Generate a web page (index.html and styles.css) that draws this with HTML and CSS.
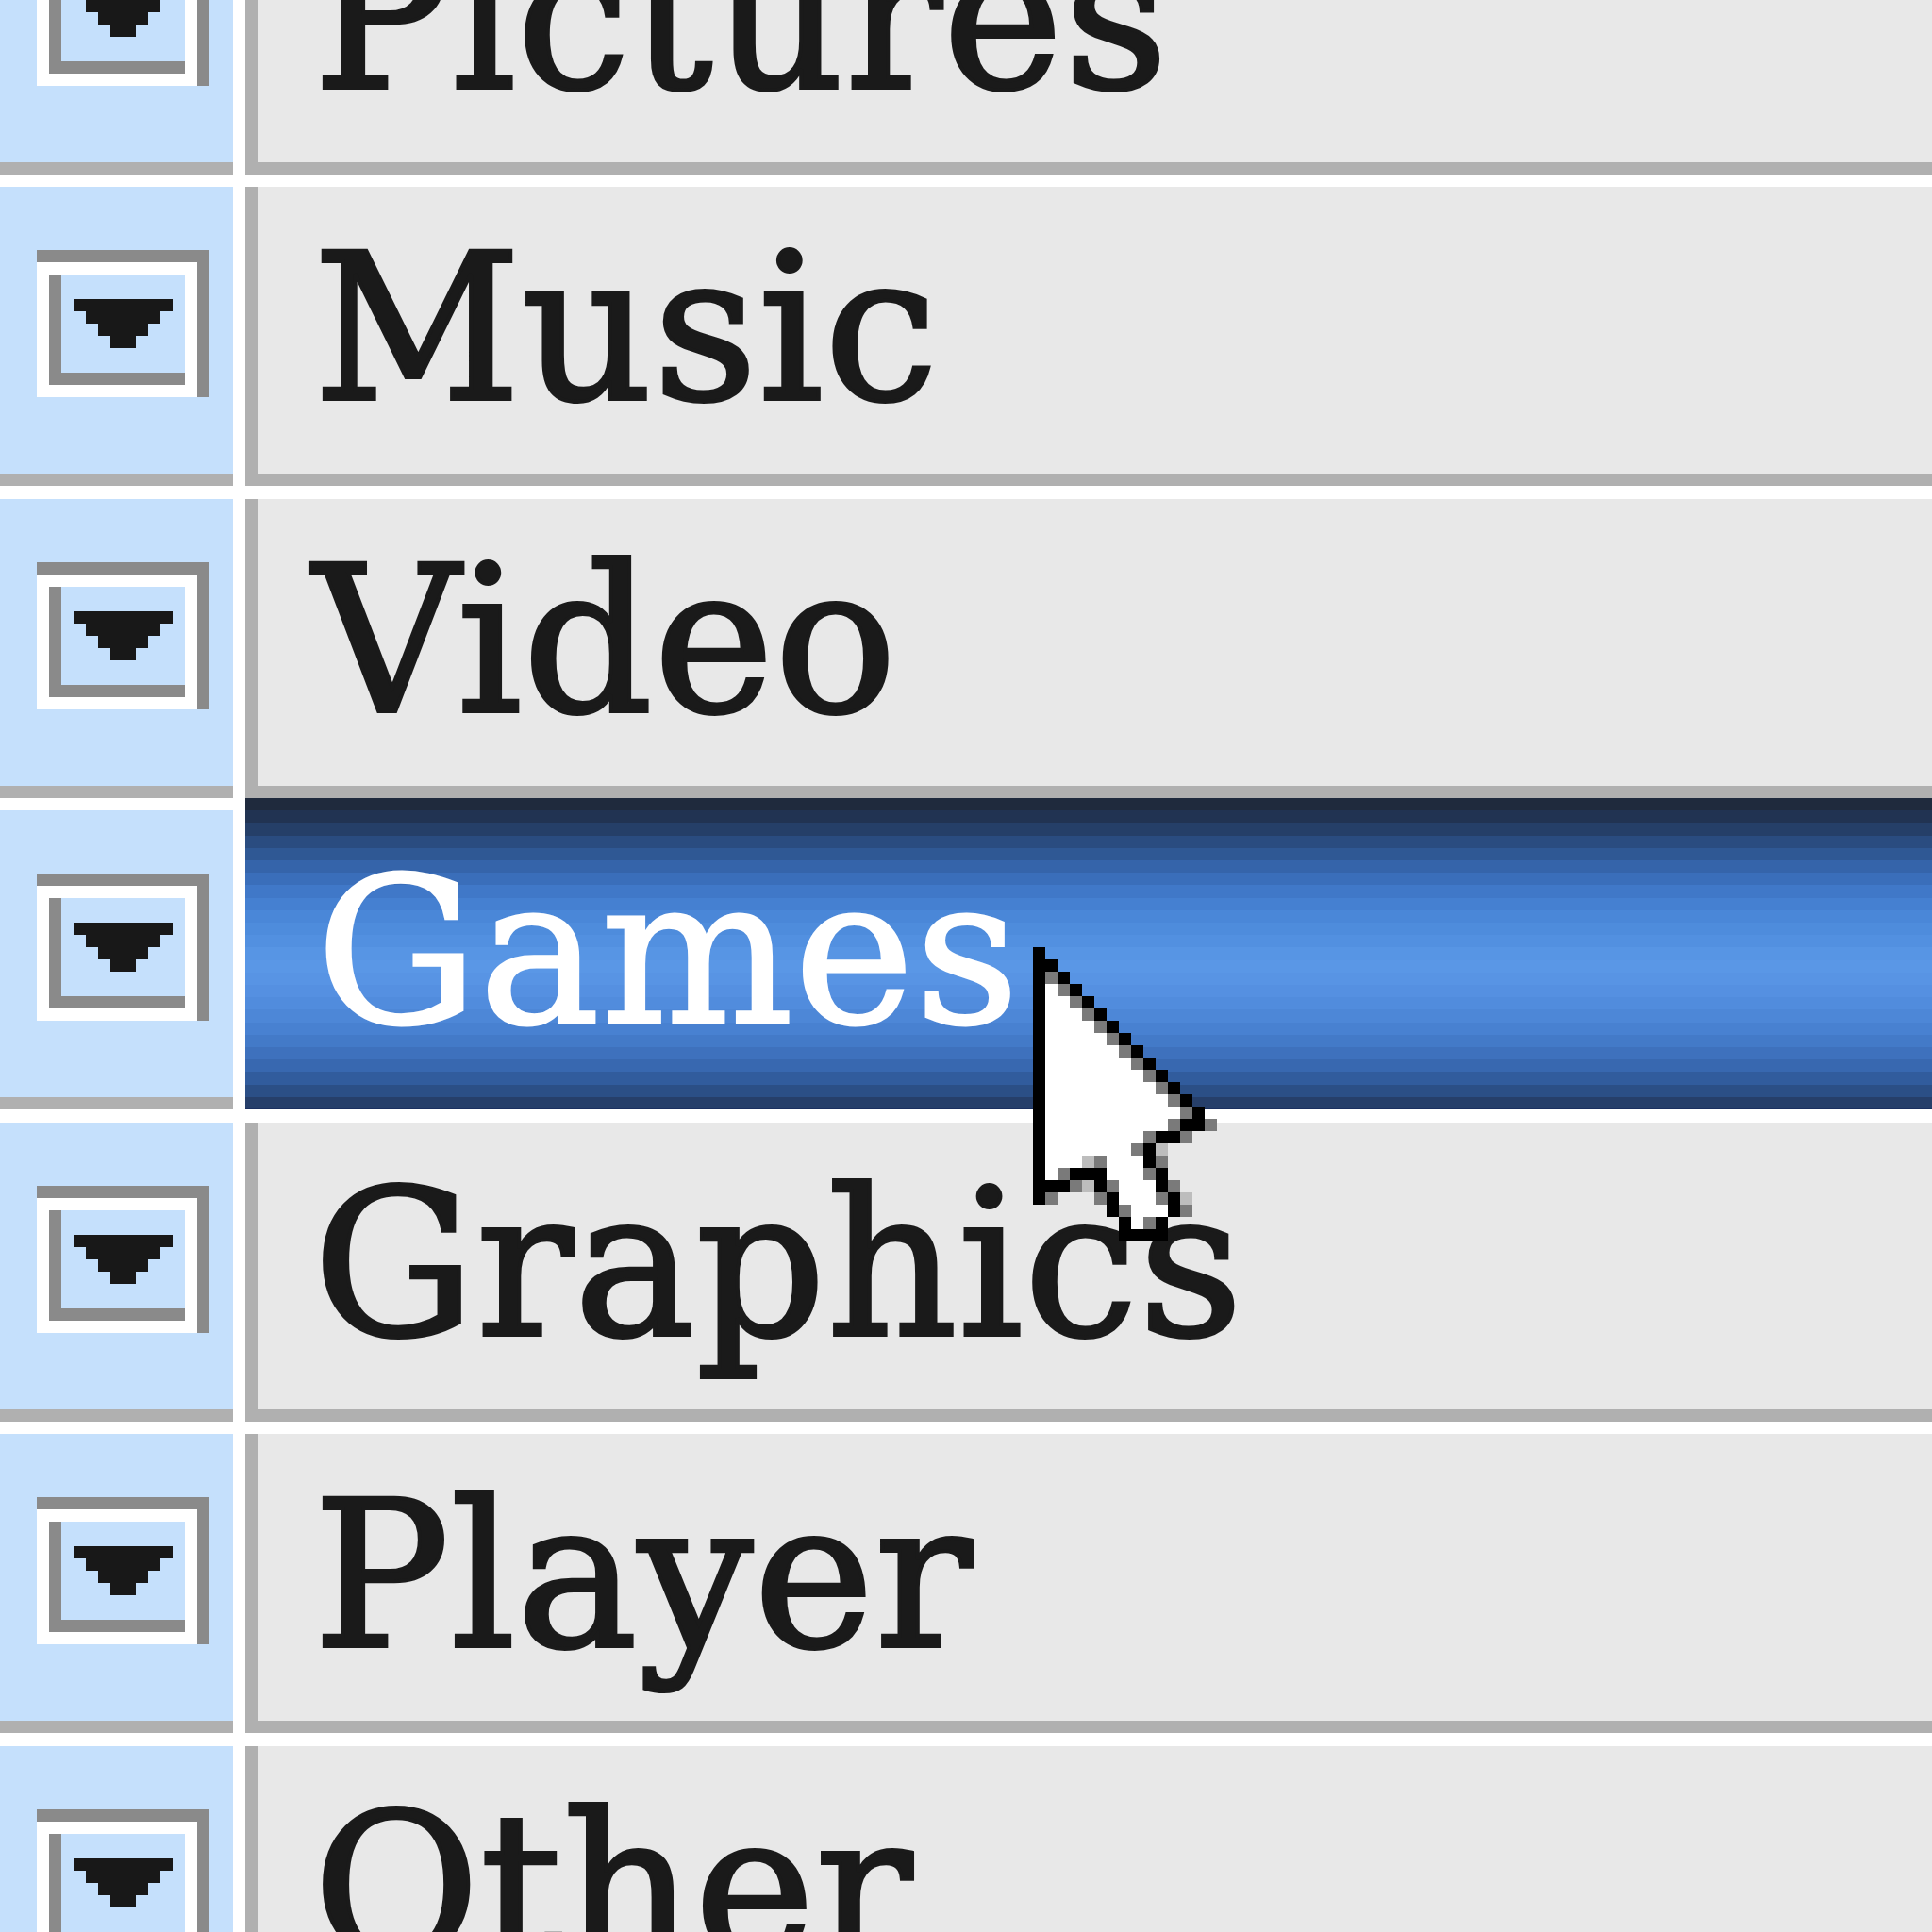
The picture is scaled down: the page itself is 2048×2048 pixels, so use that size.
FILE: index.html
```html
<!DOCTYPE html>
<html>
<head>
<meta charset="utf-8">
<link rel="stylesheet" href="styles.css">
</head>
<body>
<div class="list">
  <div class="row">
    <div class="key"><svg class="dd" viewBox="0 0 14 12" shape-rendering="crispEdges"><use href="#ddi"/></svg></div>
    <div class="item">Pictures</div>
  </div>
  <div class="row">
    <div class="key"><svg class="dd" viewBox="0 0 14 12" shape-rendering="crispEdges"><use href="#ddi"/></svg></div>
    <div class="item">Music</div>
  </div>
  <div class="row">
    <div class="key"><svg class="dd" viewBox="0 0 14 12" shape-rendering="crispEdges"><use href="#ddi"/></svg></div>
    <div class="item">Video</div>
  </div>
  <div class="row">
    <div class="key"><svg class="dd" viewBox="0 0 14 12" shape-rendering="crispEdges"><use href="#ddi"/></svg></div>
    <div class="item sel">Games</div>
  </div>
  <div class="row">
    <div class="key"><svg class="dd" viewBox="0 0 14 12" shape-rendering="crispEdges"><use href="#ddi"/></svg></div>
    <div class="item">Graphics</div>
  </div>
  <div class="row">
    <div class="key"><svg class="dd" viewBox="0 0 14 12" shape-rendering="crispEdges"><use href="#ddi"/></svg></div>
    <div class="item">Player</div>
  </div>
  <div class="row">
    <div class="key"><svg class="dd" viewBox="0 0 14 12" shape-rendering="crispEdges"><use href="#ddi"/></svg></div>
    <div class="item">Other</div>
  </div>
</div>

<svg class="defs" width="0" height="0">
  <defs>
    <g id="ddi">
      <rect x="0" y="0" width="14" height="1" fill="#8a8a8a"/>
      <rect x="13" y="0" width="1" height="12" fill="#8a8a8a"/>
      <rect x="0" y="1" width="1" height="11" fill="#ffffff"/>
      <rect x="0" y="11" width="13" height="1" fill="#ffffff"/>
      <rect x="1" y="1" width="12" height="1" fill="#ffffff"/>
      <rect x="12" y="1" width="1" height="10" fill="#ffffff"/>
      <rect x="1" y="2" width="1" height="9" fill="#8a8a8a"/>
      <rect x="1" y="10" width="11" height="1" fill="#8a8a8a"/>
      <rect x="3" y="4" width="8" height="1" fill="#181818"/>
      <rect x="4" y="5" width="6" height="1" fill="#181818"/>
      <rect x="5" y="6" width="4" height="1" fill="#181818"/>
      <rect x="6" y="7" width="2" height="1" fill="#181818"/>
    </g>
  </defs>
</svg>

<svg class="cursor" viewBox="0 0 15 24" shape-rendering="crispEdges">
  <g fill="#ffffff">
    <rect x="1" y="3" width="1" height="1"/>
    <rect x="1" y="4" width="2" height="1"/>
    <rect x="1" y="5" width="3" height="1"/>
    <rect x="1" y="6" width="4" height="1"/>
    <rect x="1" y="7" width="5" height="1"/>
    <rect x="1" y="8" width="6" height="1"/>
    <rect x="1" y="9" width="7" height="1"/>
    <rect x="1" y="10" width="8" height="1"/>
    <rect x="1" y="11" width="9" height="1"/>
    <rect x="1" y="12" width="10" height="1"/>
    <rect x="1" y="13" width="11" height="1"/>
    <rect x="1" y="14" width="10" height="1"/>
    <rect x="1" y="15" width="8" height="1"/>
    <rect x="1" y="16" width="7" height="1"/>
    <rect x="1" y="17" width="3" height="1"/>
    <rect x="6" y="17" width="3" height="1"/>
    <rect x="1" y="18" width="1" height="1"/>
    <rect x="6" y="18" width="3" height="1"/>
    <rect x="7" y="19" width="3" height="1"/>
    <rect x="7" y="20" width="3" height="1"/>
    <rect x="8" y="21" width="3" height="1"/>
    <rect x="8" y="22" width="1" height="1"/>
  </g>
  <g fill="#7a7a7a">
    <rect x="1" y="2" width="1" height="1"/>
    <rect x="2" y="3" width="1" height="1"/>
    <rect x="3" y="4" width="1" height="1"/>
    <rect x="4" y="5" width="1" height="1"/>
    <rect x="5" y="6" width="1" height="1"/>
    <rect x="6" y="7" width="1" height="1"/>
    <rect x="7" y="8" width="1" height="1"/>
    <rect x="8" y="9" width="1" height="1"/>
    <rect x="9" y="10" width="1" height="1"/>
    <rect x="10" y="11" width="1" height="1"/>
    <rect x="11" y="12" width="1" height="1"/>
    <rect x="12" y="13" width="1" height="1"/>
    <rect x="11" y="14" width="1" height="1"/>
    <rect x="14" y="14" width="1" height="1"/>
    <rect x="9" y="15" width="1" height="1"/>
    <rect x="12" y="15" width="1" height="1"/>
    <rect x="8" y="16" width="1" height="1"/>
    <rect x="5" y="17" width="1" height="1"/>
    <rect x="10" y="17" width="1" height="1"/>
    <rect x="2" y="18" width="1" height="1"/>
    <rect x="9" y="18" width="1" height="1"/>
    <rect x="3" y="19" width="1" height="1"/>
    <rect x="6" y="19" width="1" height="1"/>
    <rect x="11" y="19" width="1" height="1"/>
    <rect x="1" y="20" width="1" height="1"/>
    <rect x="5" y="20" width="1" height="1"/>
    <rect x="10" y="20" width="1" height="1"/>
    <rect x="7" y="21" width="1" height="1"/>
    <rect x="12" y="21" width="1" height="1"/>
    <rect x="9" y="22" width="1" height="1"/>
  </g>
  <g fill="#bdbdbd">
    <rect x="10" y="16" width="1" height="1"/>
    <rect x="4" y="17" width="1" height="1"/>
    <rect x="4" y="19" width="1" height="1"/>
    <rect x="12" y="20" width="1" height="1"/>
  </g>
  <g fill="#000000">
    <rect x="0" y="0" width="1" height="21"/>
    <rect x="1" y="1" width="1" height="1"/>
    <rect x="2" y="2" width="1" height="1"/>
    <rect x="3" y="3" width="1" height="1"/>
    <rect x="4" y="4" width="1" height="1"/>
    <rect x="5" y="5" width="1" height="1"/>
    <rect x="6" y="6" width="1" height="1"/>
    <rect x="7" y="7" width="1" height="1"/>
    <rect x="8" y="8" width="1" height="1"/>
    <rect x="9" y="9" width="1" height="1"/>
    <rect x="10" y="10" width="1" height="1"/>
    <rect x="11" y="11" width="1" height="1"/>
    <rect x="12" y="12" width="1" height="1"/>
    <rect x="13" y="13" width="1" height="1"/>
    <rect x="12" y="14" width="2" height="1"/>
    <rect x="10" y="15" width="2" height="1"/>
    <rect x="9" y="16" width="1" height="1"/>
    <rect x="9" y="17" width="1" height="1"/>
    <rect x="3" y="18" width="3" height="1"/>
    <rect x="10" y="18" width="1" height="1"/>
    <rect x="1" y="19" width="2" height="1"/>
    <rect x="5" y="19" width="1" height="1"/>
    <rect x="10" y="19" width="1" height="1"/>
    <rect x="6" y="20" width="1" height="1"/>
    <rect x="11" y="20" width="1" height="1"/>
    <rect x="6" y="21" width="1" height="1"/>
    <rect x="11" y="21" width="1" height="1"/>
    <rect x="7" y="22" width="1" height="1"/>
    <rect x="10" y="22" width="1" height="1"/>
    <rect x="7" y="23" width="4" height="1"/>
  </g>
</svg>
</body>
</html>
```

FILE: styles.css
```css
html, body {
  margin: 0;
  padding: 0;
  background: #ffffff;
  width: 2048px;
  height: 2048px;
  overflow: hidden;
  position: relative;
}

.list {
  display: flex;
  flex-direction: column;
  margin-top: -146px;
  height: 2194px;
  overflow: hidden;
}

.row {
  display: grid;
  grid-template-columns: 247px 1fr;
  column-gap: 13px;
  height: 330.5px;
  flex: none;
}

.key {
  margin-top: 13.5px;
  background: #c5e0fc;
  border-bottom: 13px solid #b0b0b0;
  padding: 66px 0 0 39px;
  box-sizing: content-box;
  height: 238px;
}

.dd {
  display: block;
  width: 183px;
  height: 158px;
}

.item {
  margin-top: 13.5px;
  height: 261px;
  background: #e8e8e8;
  border-left: 13px solid #b0b0b0;
  border-bottom: 13px solid #b0b0b0;
  padding: 43px 0 0 59px;
  font-family: "DejaVu Serif", serif;
  font-size: 215px;
  line-height: 215px;
  letter-spacing: 1px;
  color: #1a1a1a;
  -webkit-text-stroke: 4px #1a1a1a;
  white-space: nowrap;
  overflow: hidden;
}

.item.sel {
  margin-top: 0;
  border: none;
  height: 274px;
  padding: 56.5px 0 0 75px;
  color: #ffffff;
  -webkit-text-stroke: 3px #ffffff;
  background: linear-gradient(to bottom,
    #1f2a3d 0 4%, #213352 4% 8%, #253f68 8% 12%, #2a4c80 12% 16%,
    #2f5894 16% 20%, #3564aa 20% 24%, #3a6eba 24% 28%, #4078c8 28% 32%,
    #4580d1 32% 36%, #4a87d8 36% 40%, #4e8cdc 40% 44%, #5290e0 44% 48%,
    #5795e4 48% 52%, #5a97e6 52% 56%, #5894e4 56% 60%, #5590e1 60% 64%,
    #518cdd 64% 68%, #4d87d7 68% 72%, #4881d1 72% 76%, #437ac8 76% 80%,
    #3e71bd 80% 84%, #3868b0 84% 88%, #315c9d 88% 92%, #2b4f86 92% 96%,
    #263f6a 96% 99.5%, #1b3060 99.5% 100%);
}

.defs {
  position: absolute;
  width: 0;
  height: 0;
}

.cursor {
  position: absolute;
  left: 1095px;
  top: 1004px;
  width: 195px;
  height: 312px;
}
```
